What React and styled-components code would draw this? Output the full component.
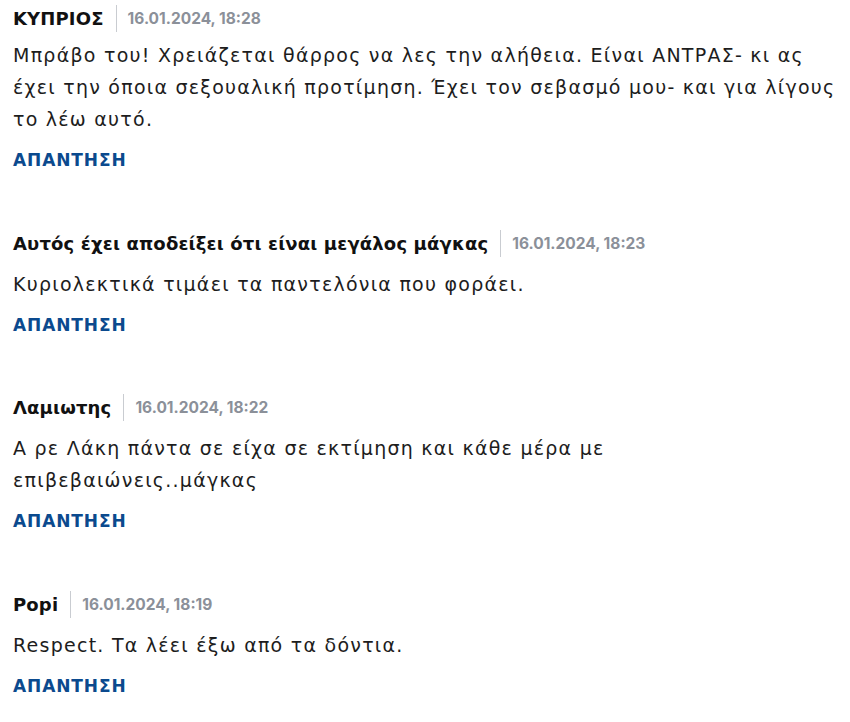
import React from 'react';
import styled, { createGlobalStyle } from 'styled-components';

const GlobalStyle = createGlobalStyle`
    body {
        margin: 0;
        background: #fff;
        font-family: "DejaVu Sans", "Noto Sans", sans-serif;
    }
`;

const List = styled.ul`
    list-style: none;
    margin: 0;
    padding: 5px 13px 0;
    width: 836px;
`;

const Item = styled.li`
    margin-bottom: 58.5px;
`;

const Head = styled.div`
    display: flex;
    align-items: center;
    height: 27px;
`;

const Author = styled.span`
    font-size: 18px;
    font-weight: 700;
    color: #111;
    letter-spacing: 0.15px;
`;

const Sep = styled.span`
    width: 1px;
    height: 27px;
    background: #c9ccd1;
    margin: 0 11px 0 12px;
`;

const Date = styled.span`
    font-family: "Inter", sans-serif;
    font-size: 15.5px;
    font-weight: 700;
    color: #8b9099;
`;

const Body = styled.p`
    margin: ${p => (p.$first ? '7px' : '11px')} 0 0;
    font-size: 19px;
    font-weight: 400;
    line-height: 32px;
    color: #1d1d1d;
    letter-spacing: 1.25px;
`;

const Reply = styled.button`
    display: block;
    margin-top: 14px;
    padding: 0;
    border: 0;
    background: none;
    font-family: inherit;
    font-size: 17px;
    font-weight: 700;
    line-height: 22px;
    letter-spacing: 0.9px;
    color: #0b4a8e;
    cursor: pointer;
`;

const comments = [
    {
        name: 'ΚΥΠΡΙΟΣ',
        date: '16.01.2024, 18:28',
        text: 'Μπράβο του! Χρειάζεται θάρρος να λες την αλήθεια. Είναι ΑΝΤΡΑΣ- κι ας έχει την όποια σεξουαλική προτίμηση. Έχει τον σεβασμό μου- και για λίγους το λέω αυτό.'
    },
    {
        name: 'Αυτός έχει αποδείξει ότι είναι μεγάλος μάγκας',
        date: '16.01.2024, 18:23',
        text: 'Κυριολεκτικά τιμάει τα παντελόνια που φοράει.'
    },
    {
        name: 'Λαμιωτης',
        date: '16.01.2024, 18:22',
        text: 'Α ρε Λάκη πάντα σε είχα σε εκτίμηση και κάθε μέρα με επιβεβαιώνεις..μάγκας'
    },
    {
        name: 'Popi',
        date: '16.01.2024, 18:19',
        text: 'Respect. Τα λέει έξω από τα δόντια.'
    }
];

const App = () => (
    <>
        <GlobalStyle />
        <List>
            {comments.map((c, i) => (
                <Item key={c.date}>
                    <Head>
                        <Author>{c.name}</Author>
                        <Sep />
                        <Date>{c.date}</Date>
                    </Head>
                    <Body $first={i === 0}>{c.text}</Body>
                    <Reply>ΑΠΑΝΤΗΣΗ</Reply>
                </Item>
            ))}
        </List>
    </>
);

export default App;
